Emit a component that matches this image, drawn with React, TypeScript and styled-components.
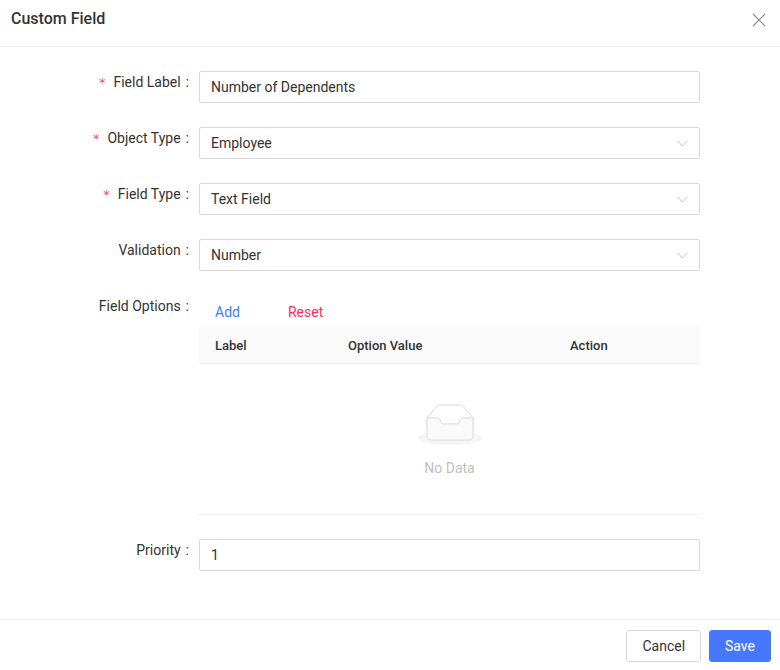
import React from "react";
import styled, { createGlobalStyle } from "styled-components";

const GlobalStyle = createGlobalStyle`
  html, body {
    margin: 0;
    padding: 0;
    background: #fff;
  }
  body {
    font-family: Roboto, "Liberation Sans", Arial, sans-serif;
    font-size: 14px;
    color: #333;
  }
  * { box-sizing: border-box; }
`;

/* ── Shell ── */

const Modal = styled.div`
  width: 780px;
  height: 670px;
  display: flex;
  flex-direction: column;
  background: #fff;
`;

const Header = styled.div`
  height: 47px;
  padding: 8px 11px 0 11px;
  border-bottom: 1px solid #ebebeb;
  display: flex;
  justify-content: space-between;
  align-items: flex-start;
`;

const Title = styled.div`
  font-size: 16px;
  font-weight: 500;
  line-height: 22px;
  color: #333;
`;

const CloseButton = styled.button`
  border: 0;
  background: transparent;
  padding: 0;
  margin: 5px 3px 0 0;
  width: 14px;
  height: 14px;
  display: flex;
  cursor: pointer;
`;

const Body = styled.div`
  flex: 1;
  padding: 24px 80px 0 0;
`;

const Footer = styled.div`
  border-top: 1px solid #ebebeb;
  padding: 10px 9px 8px 0;
  display: flex;
  justify-content: flex-end;
  gap: 8px;
`;

/* ── Form ── */

const FormItem = styled.div`
  display: flex;
  align-items: flex-start;
  margin-bottom: 24px;
`;

const Label = styled.label`
  width: 199px;
  flex-shrink: 0;
  text-align: right;
  line-height: 22px;
  font-size: 14px;
  color: #333;
  white-space: nowrap;

  &::after {
    content: ":";
    margin: 0 10px 0 5px;
  }
`;

const Required = styled.span`
  color: #ff4d4f;
  margin-right: 8px;
  font-family: SimSun, "DejaVu Sans", sans-serif;
  font-size: 13px;
`;

const Control = styled.div`
  flex: 1;
  min-width: 0;
`;

const Input = styled.input`
  width: 100%;
  height: 32px;
  padding: 0 11px;
  border: 1px solid #d9d9d9;
  border-radius: 2px;
  font-family: inherit;
  font-size: 14px;
  color: #333;
  outline: none;
  background: #fff;
`;

const SelectBox = styled.div`
  height: 32px;
  padding: 0 11px;
  border: 1px solid #d9d9d9;
  border-radius: 2px;
  display: flex;
  align-items: center;
  justify-content: space-between;
  font-size: 14px;
  color: #333;
  background: #fff;
`;

const TextButtons = styled.div`
  display: flex;
  height: 32px;
  align-items: center;
`;

const LinkButton = styled.button<{ $color: string }>`
  border: 0;
  background: transparent;
  height: 32px;
  padding: 0 16px;
  margin-right: 16px;
  font-family: inherit;
  font-size: 14px;
  padding-top: 2px;
  color: ${(p) => p.$color};
  cursor: pointer;
`;

/* ── Table ── */

const Table = styled.div`
  border-bottom: 1px solid #f0f0f0;
`;

const HeadRow = styled.div`
  display: grid;
  grid-template-columns: 133px 222px 1fr;
  height: 37px;
  background: #fafafa;
  border-bottom: 1px solid #f0f0f0;
`;

const HeadCell = styled.div`
  padding: 0 16px;
  display: flex;
  align-items: center;
  font-size: 13px;
  font-weight: 500;
  color: #333;
`;

const Empty = styled.div`
  height: 150px;
  display: flex;
  flex-direction: column;
  align-items: center;
  padding-top: 40px;
`;

const EmptyText = styled.div`
  margin-top: 12px;
  font-size: 14px;
  color: #bfbfbf;
  line-height: 22px;
`;

/* ── Buttons ── */

const Button = styled.button<{ $primary?: boolean }>`
  height: 32px;
  padding: 0 15px;
  border-radius: 3px;
  font-family: inherit;
  font-size: 14px;
  cursor: pointer;
  border: 1px solid ${(p) => (p.$primary ? "#4677ff" : "#d9d9d9")};
  background: ${(p) => (p.$primary ? "#4677ff" : "#fff")};
  color: ${(p) => (p.$primary ? "#fff" : "#333")};
`;

/* ── Icons ── */

const CloseIcon = () => (
  <svg width="14" height="14" viewBox="0 0 14 14">
    <path d="M1 1L13 13M13 1L1 13" stroke="#8c8c8c" strokeWidth="1.2" fill="none" />
  </svg>
);

const Chevron = () => (
  <svg width="11" height="7" viewBox="0 0 11 7">
    <path d="M0.5 0.8L5.5 6L10.5 0.8" stroke="#bfbfbf" strokeWidth="1" fill="none" />
  </svg>
);

const EmptyImage = () => (
  <svg width="64" height="41" viewBox="0 0 64 41">
    <g transform="translate(0 1)" fill="none" fillRule="evenodd">
      <ellipse fill="#f5f5f5" cx="32" cy="33" rx="32" ry="7" />
      <g fillRule="nonzero" stroke="#d9d9d9">
        <path d="M55 12.76L44.854 1.258C44.367.474 43.656 0 42.907 0H21.093c-.749 0-1.46.474-1.947 1.257L9 12.761V22h46v-9.24z" />
        <path
          d="M41.613 15.931c0-1.605.994-2.93 2.227-2.931H55v18.137C55 33.26 53.68 35 52.05 35h-40.1C10.32 35 9 33.259 9 31.137V13h11.16c1.233 0 2.227 1.323 2.227 2.928v.022c0 1.605 1.005 2.901 2.237 2.901h14.752c1.232 0 2.237-1.308 2.237-2.913v-.007z"
          fill="#fafafa"
        />
      </g>
    </g>
  </svg>
);

const Select: React.FC<{ value: string }> = ({ value }) => (
  <SelectBox>
    <span>{value}</span>
    <Chevron />
  </SelectBox>
);

export default function App() {
  return (
    <>
      <GlobalStyle />
      <Modal>
        <Header>
          <Title>Custom Field</Title>
          <CloseButton aria-label="Close">
            <CloseIcon />
          </CloseButton>
        </Header>

        <Body>
          <FormItem>
            <Label><Required>*</Required>Field Label</Label>
            <Control>
              <Input defaultValue="Number of Dependents" />
            </Control>
          </FormItem>

          <FormItem>
            <Label><Required>*</Required>Object Type</Label>
            <Control>
              <Select value="Employee" />
            </Control>
          </FormItem>

          <FormItem>
            <Label><Required>*</Required>Field Type</Label>
            <Control>
              <Select value="Text Field" />
            </Control>
          </FormItem>

          <FormItem>
            <Label>Validation</Label>
            <Control>
              <Select value="Number" />
            </Control>
          </FormItem>

          <FormItem>
            <Label>Field Options</Label>
            <Control>
              <TextButtons>
                <LinkButton $color="#3d7eff">Add</LinkButton>
                <LinkButton $color="#ff2e55">Reset</LinkButton>
              </TextButtons>
              <Table>
                <HeadRow>
                  <HeadCell>Label</HeadCell>
                  <HeadCell>Option Value</HeadCell>
                  <HeadCell>Action</HeadCell>
                </HeadRow>
                <Empty>
                  <EmptyImage />
                  <EmptyText>No Data</EmptyText>
                </Empty>
              </Table>
            </Control>
          </FormItem>

          <FormItem>
            <Label>Priority</Label>
            <Control>
              <Input defaultValue="1" />
            </Control>
          </FormItem>
        </Body>

        <Footer>
          <Button>Cancel</Button>
          <Button $primary>Save</Button>
        </Footer>
      </Modal>
    </>
  );
}
